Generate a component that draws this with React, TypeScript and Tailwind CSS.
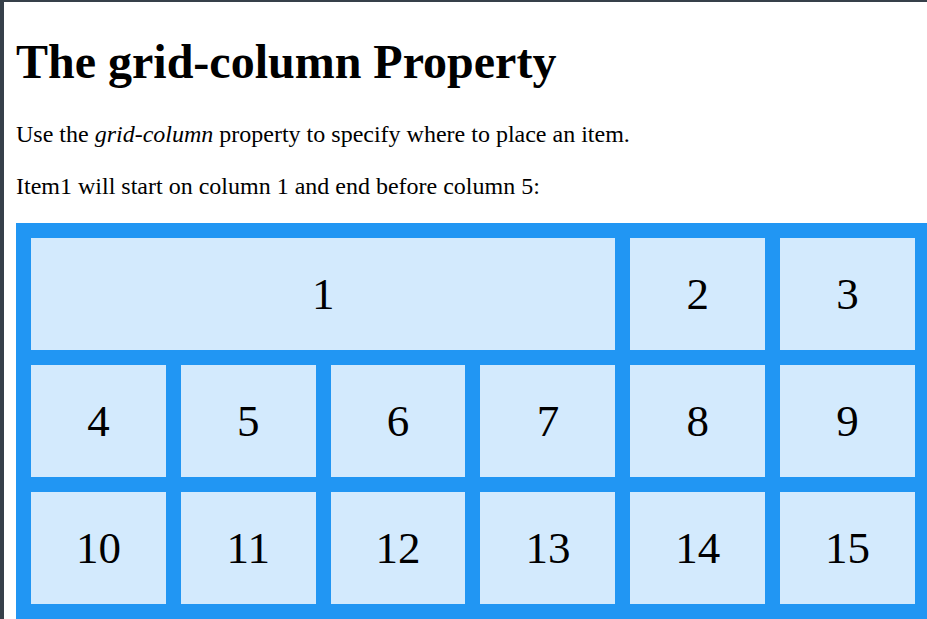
import React from "react";

export default function App() {
  const rest = ["4", "5", "6", "7", "8", "9", "10", "11", "12", "13", "14", "15"];
  return (
    <div className="w-[927px] h-[619px] overflow-hidden bg-[#36404a] pl-[4px] pt-[2px]">
      <div
        className="w-[1000px] h-[700px] bg-white px-[12px] text-black"
        style={{ fontFamily: '"Liberation Serif", "Times New Roman", serif' }}
      >
        <h1 className="pt-[32px] text-[48px] font-bold leading-[55px]">The grid-column Property</h1>
        <p className="mt-[32px] text-[24px] leading-[27.6px]">
          Use the <em>grid-column</em> property to specify where to place an item.
        </p>
        <p className="mt-[24px] text-[24px] leading-[27.6px]">Item1 will start on column 1 and end before column 5:</p>
        <div className="mt-[23px] w-[914px] grid grid-cols-[repeat(6,1fr)] gap-[15px] p-[15px] bg-[#2196F3]">
          <div className="col-span-4 bg-white/80 text-center py-[30px] text-[45px] leading-[52px]">1</div>
          <div className="bg-white/80 text-center py-[30px] text-[45px] leading-[52px]">2</div>
          <div className="bg-white/80 text-center py-[30px] text-[45px] leading-[52px]">3</div>
          {rest.map((n) => (
            <div key={n} className="bg-white/80 text-center py-[30px] text-[45px] leading-[52px]">
              {n}
            </div>
          ))}
        </div>
      </div>
    </div>
  );
}
